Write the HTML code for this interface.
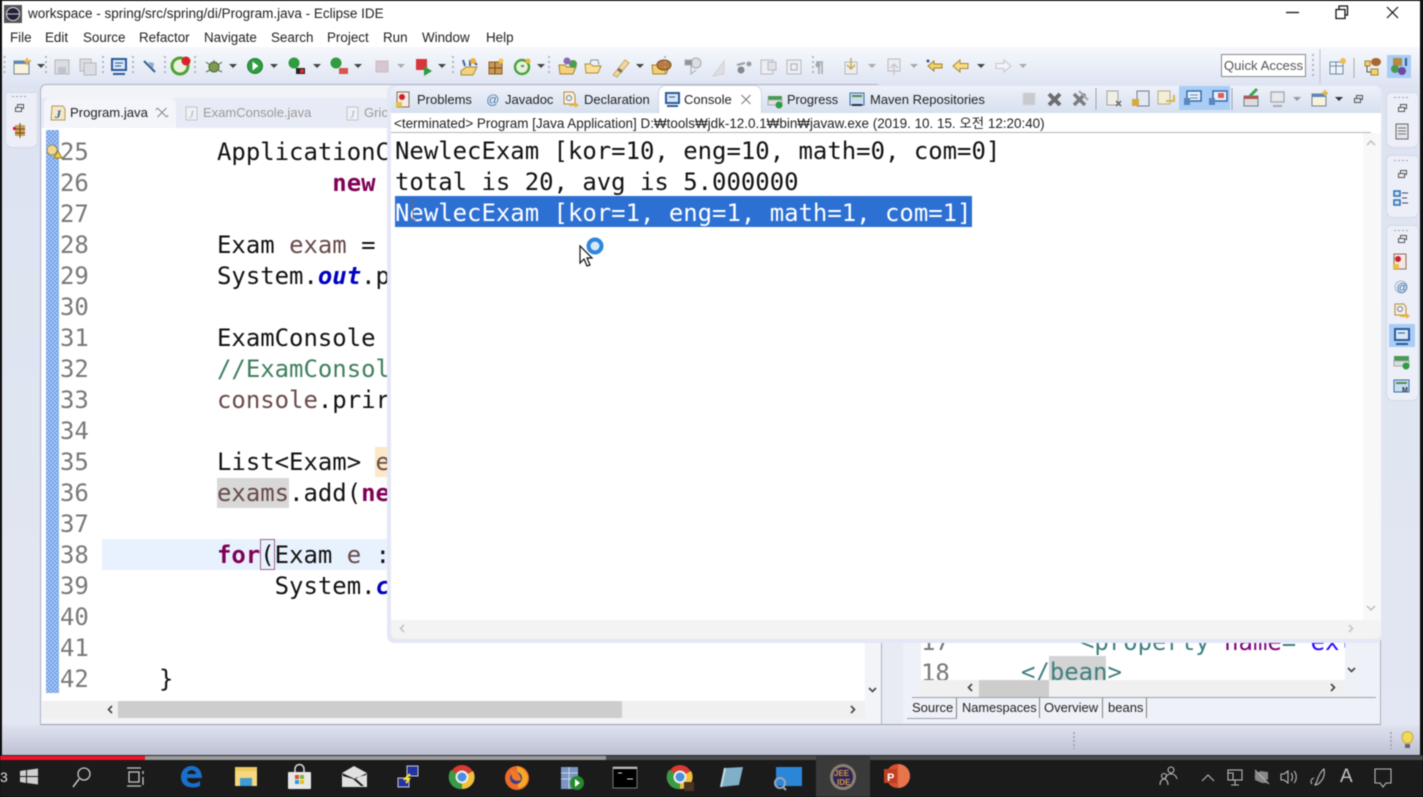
<!DOCTYPE html>
<html><head><meta charset="utf-8"><style>
html,body{margin:0;padding:0;background:#000}
#r{position:relative;width:1423px;height:797px;overflow:hidden;background:#d9dfee;font-family:"Liberation Sans","Noto Sans CJK KR",sans-serif;font-size:13px;color:#222;filter:blur(.4px)}
.a{position:absolute}
.t{position:absolute;white-space:pre;line-height:20px}
.m{position:absolute;white-space:pre;font-family:"DejaVu Sans Mono",monospace;font-size:23.95px;line-height:31px;color:#111}
.n{color:#787878}.k{color:#7f0055;font-weight:bold}.v{color:#6a4a4a}.f{color:#0000c0;font-weight:bold;font-style:italic}.c{color:#3f7f5f}
.tt{color:#3f7f7f}
svg{position:absolute;left:0;top:0}
</style></head><body><div id="r">
<!-- frame -->
<div class="a" style="left:0;top:0;width:1423px;height:1px;background:#222"></div>
<div class="a" style="left:2px;top:1px;width:1418px;height:46px;background:#fff"></div>
<div class="a" style="left:2px;top:47px;width:1418px;height:37px;background:linear-gradient(#f6f8fc,#dfe5f3)"></div>
<div class="a" style="left:2px;top:84px;width:1418px;height:641px;background:linear-gradient(#dde3f1,#e3e7f3)"></div>
<div class="a" style="left:2px;top:725px;width:1418px;height:30px;background:linear-gradient(#dfe3f0,#bcc0d3)"></div>
<div class="a" style="left:0;top:0;width:2px;height:755px;background:#111"></div>
<div class="a" style="left:1420px;top:0;width:3px;height:755px;background:#111"></div>
<!-- title / menu -->
<div class="t" style="left:28px;top:4px;font-size:13.5px">workspace - spring/src/spring/di/Program.java - Eclipse IDE</div>
<div class="t" style="left:10px;top:28px;font-size:13.4px">File</div>
<div class="t" style="left:45px;top:28px;font-size:13.4px">Edit</div>
<div class="t" style="left:83px;top:28px;font-size:13.4px">Source</div>
<div class="t" style="left:139px;top:28px;font-size:13.4px">Refactor</div>
<div class="t" style="left:204px;top:28px;font-size:13.4px">Navigate</div>
<div class="t" style="left:271px;top:28px;font-size:13.4px">Search</div>
<div class="t" style="left:327px;top:28px;font-size:13.4px">Project</div>
<div class="t" style="left:383px;top:28px;font-size:13.4px">Run</div>
<div class="t" style="left:422px;top:28px;font-size:13.4px">Window</div>
<div class="t" style="left:486px;top:28px;font-size:13.4px">Help</div>
<!-- quick access -->
<div class="t" style="left:1221px;top:54px;width:83px;height:21px;border:1px solid #8a8a8a;background:#fff;text-align:center;color:#555;font-size:13.2px;line-height:22px">Quick Access</div>
<!-- left trim -->
<div class="a" style="left:5px;top:92px;width:33px;height:56px;background:#eceff7;border:1px solid #d3d8e6;box-sizing:border-box;border-radius:0 0 7px 7px"></div>
<!-- right trim -->
<div class="a" style="left:1386px;top:92px;width:33px;height:56px;background:#eceff7;border:1px solid #d3d8e6;box-sizing:border-box;border-radius:5px 5px 7px 7px"></div>
<div class="a" style="left:1386px;top:155px;width:33px;height:63px;background:#eceff7;border:1px solid #d3d8e6;box-sizing:border-box;border-radius:5px 5px 7px 7px"></div>
<div class="a" style="left:1386px;top:225px;width:33px;height:176px;background:#eceff7;border:1px solid #d3d8e6;box-sizing:border-box;border-radius:5px 5px 7px 7px"></div>
<div class="a" style="left:1389px;top:324px;width:26px;height:23px;background:#a9cdf5"></div>

<!-- editor panel -->
<div class="a" style="left:40px;top:84px;width:842px;height:641px;background:#f1f3f9;border:1px solid #aeb3c0;border-bottom:1px solid #9a9fad;box-sizing:border-box;border-radius:6px 6px 0 0"></div>
<div class="a" style="left:41px;top:98px;width:840px;height:30px;background:#e7ebf5"></div>
<div class="a" style="left:44px;top:98px;width:132px;height:30px;background:#f3f5fa;border-radius:7px 7px 0 0"></div>
<div class="t" style="left:70px;top:103px;font-size:13.1px">Program.java</div>
<div class="t" style="left:203px;top:103px;font-size:13px;color:#9a9a9a">ExamConsole.java</div>
<div class="t" style="left:364px;top:103px;font-size:13.1px;color:#9a9a9a">Gric</div>
<div class="a" style="left:42px;top:128px;width:823px;height:573px;background:#fff"></div>
<div class="a" style="left:46px;top:130px;width:13px;height:563px;background-color:#8ab3ee;background-image:conic-gradient(#6f9fe6 25%,#a9c9f4 0 50%,#6f9fe6 0 75%,#a9c9f4 0);background-size:4px 4px"></div>
<div class="a" style="left:102px;top:539px;width:290px;height:31px;background:#e8f2fe"></div>
<div class="a" style="left:375px;top:447px;width:14px;height:30px;background:#fce8c6"></div>
<div class="a" style="left:217px;top:478px;width:72px;height:30px;background:#d8d8d8"></div>
<div class="a" style="left:260px;top:539px;width:13px;height:29px;border:1px solid #a0608a;box-sizing:content-box"></div>

<!-- line numbers -->
<div class="m n" style="left:60px;top:137px">25
26
27
28
29
30
31
32
33
34
35
36
37
38
39
40
41
42</div>
<div class="m" style="left:217px;top:137px;width:170px;overflow:hidden">ApplicationC
        <span class="k">new</span>

Exam <span class="v">exam</span> =
System.<span class="f">out</span>.p

ExamConsole
<span class="c">//ExamConsol</span>
<span class="v">console</span>.prir

List&lt;Exam&gt; <span class="v">e</span>
<span class="v">exams</span>.add(<span class="k">ne</span>

<span class="k">for</span>(Exam <span class="v">e</span> :
    System.<span class="f">c</span></div>
<div class="m" style="left:159px;top:664px">}</div>

<!-- editor scrollbars -->
<div class="a" style="left:42px;top:701px;width:823px;height:17px;background:#f0f0f0"></div>
<div class="a" style="left:118px;top:701px;width:504px;height:17px;background:#cdcdcd"></div>
<div class="a" style="left:865px;top:128px;width:15px;height:590px;background:#f3f4f8"></div>

<!-- sash + bottom right panel -->
<div class="a" style="left:882px;top:640px;width:21px;height:85px;background:#e9ebf4;border-bottom:1px solid #9a9fad;box-sizing:border-box"></div>
<div class="a" style="left:903px;top:640px;width:478px;height:85px;background:#eff1f8;border-right:1px solid #aeb3c0;border-bottom:1px solid #9a9fad;box-sizing:border-box"></div>
<div class="a" style="left:921px;top:640px;width:424px;height:40px;background:#fff;overflow:hidden">
  <div class="a" style="left:128px;top:16px;width:57px;height:24px;background:#d4d4d4"></div>
  <div class="m n" style="left:0;top:-13px">17
18</div>
  <div class="m tt" style="left:159px;top:-13px">&lt;property <span style="color:#7f007f">name</span>=<span style="color:#2a00ff">"ext</span></div>
  <div class="m tt" style="left:100px;top:17px">&lt;/bean&gt;</div>
</div>
<div class="a" style="left:921px;top:680px;width:424px;height:17px;background:#f0f0f0"></div>
<div class="a" style="left:979px;top:680px;width:70px;height:17px;background:#cdcdcd"></div>
<div class="a" style="left:912px;top:697px;width:464px;height:1px;background:#9a9fad"></div>
<div class="a" style="left:956px;top:698px;width:1px;height:20px;background:#808080"></div>
<div class="a" style="left:1039px;top:698px;width:1px;height:20px;background:#808080"></div>
<div class="a" style="left:1102px;top:698px;width:1px;height:20px;background:#808080"></div>
<div class="a" style="left:1146px;top:698px;width:1px;height:20px;background:#808080"></div>
<div class="a" style="left:907px;top:718px;width:50px;height:1px;background:#9a9fad"></div>
<div class="t" style="left:912px;top:698px;font-size:13px">Source</div>
<div class="t" style="left:962px;top:698px;font-size:12.8px">Namespaces</div>
<div class="t" style="left:1044px;top:698px;font-size:13px">Overview</div>
<div class="t" style="left:1108px;top:698px;font-size:13px">beans</div>

<!-- console panel -->
<div class="a" style="left:387px;top:85px;width:995px;height:558px;background:#e4e7f5;border-radius:7px"></div>
<div class="a" style="left:391px;top:86px;width:990px;height:27px;background:linear-gradient(#eef1f9,#d6e0f0);border-radius:7px 7px 0 0"></div>
<div class="a" style="left:659px;top:86px;width:102px;height:27px;background:#fff;border-radius:7px 7px 0 0;box-shadow:0 0 0 1px #d0d5e2"></div>
<div class="a" style="left:1179px;top:86px;width:51px;height:24px;background:#a9cdf5"></div>
<div class="a" style="left:391px;top:113px;width:990px;height:20px;background:#fff"></div>
<div class="a" style="left:391px;top:132px;width:980px;height:1px;background:#b5b5b5"></div>
<div class="a" style="left:391px;top:133px;width:990px;height:487px;background:#fff"></div>
<div class="a" style="left:1363px;top:133px;width:18px;height:487px;background:#f8f8f8"></div>
<div class="a" style="left:391px;top:620px;width:990px;height:19px;background:#f3f3f3;border-radius:0 0 6px 6px"></div>
<div class="a" style="left:395px;top:196px;width:577px;height:31px;background:#2d70d4"></div>
<div class="t" style="left:417px;top:90px">Problems</div>
<div class="t" style="left:505px;top:90px">Javadoc</div>
<div class="t" style="left:584px;top:90px">Declaration</div>
<div class="t" style="left:684px;top:90px">Console</div>
<div class="t" style="left:787px;top:90px;font-size:12.8px">Progress</div>
<div class="t" style="left:870px;top:90px">Maven Repositories</div>
<div class="t" style="left:394px;top:114px;font-size:13.45px">&lt;terminated&gt; Program [Java Application] D:₩tools₩jdk-12.0.1₩bin₩javaw.exe (2019. 10. 15. 오전 12:20:40)</div>
<div class="m" style="left:395px;top:136px">NewlecExam [kor=10, eng=10, math=0, com=0]
total is 20, avg is 5.000000
<span style="color:#fff">NewlecExam [kor=1, eng=1, math=1, com=1]</span></div>

<!-- progress + taskbar -->
<div class="a" style="left:0;top:755px;width:1423px;height:1px;background:#2a2a2a"></div>
<div class="a" style="left:0;top:756px;width:1423px;height:4px;background:#4b4b4b"></div>
<div class="a" style="left:0;top:756px;width:606px;height:4px;background:#9b9b9b"></div>
<div class="a" style="left:0;top:756px;width:145px;height:4px;background:#f2102a"></div>
<div class="a" style="left:0;top:760px;width:1423px;height:37px;background:#1b1b1b"></div>
<div class="a" style="left:816px;top:756px;width:54px;height:41px;background:#3a3a3a"></div>
<div class="t" style="left:0;top:767px;color:#ddd;font-size:14px">3</div>
<div class="t" style="left:1340px;top:764px;color:#c4c4c4;font-size:19px;line-height:26px">A</div>

<svg width="1423" height="797" viewBox="0 0 1423 797" fill="none">
<!-- title icon -->
<rect x="4" y="5" width="18" height="18" fill="#555"/><circle cx="13" cy="14" r="6.500" fill="#23203a" stroke="#ddd"/><path d="M7 14h12" stroke="#ccc"/>
<!-- window controls -->
<path d="M1286 12.500h13" stroke="#111" stroke-width="1.300"/>
<path d="M1336 9.500h9v9h-9zM1339 9v-3h8.500v9h-2.500" stroke="#111" stroke-width="1.300"/>
<path d="M1387 7l11 11M1398 7l-11 11" stroke="#111" stroke-width="1.200"/>
<!-- main toolbar -->
<g id="tb">
<rect x="14" y="61" width="15" height="13" fill="#f8f3dc" stroke="#6f8397"/><rect x="14" y="61" width="15" height="3" fill="#5c86b8"/><path d="M27 58v7M24 61h7" stroke="#e9b53f" stroke-width="2"/>
<rect x="55" y="60" width="14" height="14" fill="#dcdde2" stroke="#b4b7c0"/><rect x="58" y="67" width="8" height="7" fill="#c0c3cb"/>
<rect x="80" y="59" width="11" height="12" fill="#dcdde2" stroke="#b4b7c0"/><rect x="84" y="63" width="12" height="12" fill="#dcdde2" stroke="#b4b7c0"/>
<rect x="112" y="59" width="14" height="11" fill="#d9e6f6" stroke="#2b5c9a" stroke-width="2"/><path d="M115 63h8M115 66h6" stroke="#2b5c9a"/><path d="M113 74h12" stroke="#2b5c9a" stroke-width="2"/>
<path d="M144 61l11 11" stroke="#33618f" stroke-width="2"/><path d="M148 62l6 1-1 6z" fill="#8fa9c8"/>
<circle cx="180" cy="66" r="8" fill="#e9f2df" stroke="#52a332" stroke-width="3"/><circle cx="186" cy="61" r="4.500" fill="#d8232a"/>
<circle cx="214" cy="67" r="5" fill="#7f9b4e" stroke="#4c6a3c"/><path d="M206 62l4 3M206 72l4-2M222 62l-4 3M222 72l-4-2M214 60v3" stroke="#4c6a3c"/>
<circle cx="255" cy="66" r="7.500" fill="#2e9c3f" stroke="#1e7f30"/><path d="M252.500 61.500l6 4.500-6 4.500z" fill="#fff"/>
<circle cx="294" cy="63" r="5.500" fill="#2e9c3f"/><rect x="296" y="68" width="9" height="6" fill="#222"/><rect x="300" y="69" width="4" height="4" fill="#d82c2c"/>
<circle cx="336" cy="63" r="5.500" fill="#2e9c3f"/><rect x="339" y="68" width="9" height="6" fill="#d9534f"/>
<rect x="376" y="61" width="12" height="11" fill="#d6c7d0" stroke="#c9bcc8"/>
<rect x="416" y="59" width="11" height="11" fill="#d9353a"/><path d="M424 66l8 5-8 5z" fill="#2e9c3f"/>
<path d="M461 71l5-4h11l-4 8h-12z" fill="#f2d27a" stroke="#a88b3c"/><path d="M463 60l2 6M470 60v6M474 62l3 3" stroke="#3a63a8" stroke-width="2"/><circle cx="473" cy="61" r="3" fill="#e9b53f"/>
<rect x="489" y="62" width="13" height="12" fill="#c89a54" stroke="#8a5d22"/><path d="M495 62v12M489 68h13" stroke="#7a4b1c"/><circle cx="501" cy="61" r="2.500" fill="#f2c74c"/>
<circle cx="522" cy="67" r="7" fill="#e7f0da" stroke="#46a339" stroke-width="2.400"/><path d="M524 66h-3" stroke="#46a339" stroke-width="2"/><circle cx="528" cy="61" r="2.500" fill="#e9b53f"/>
<path d="M560 74l-1-9h6l2 2h9l-3 7z" fill="#f4d27c" stroke="#a4812e"/><circle cx="573" cy="64" r="4" fill="#4e9b52"/><circle cx="567" cy="61" r="3.500" fill="#8b68b8"/>
<path d="M586 73l-1-9h6l2 2h8l-3 7z" fill="#f8e09a" stroke="#b18d3a"/><path d="M590 64l1-4h7l1 5" stroke="#8a8f9a" fill="#eef1f8"/>
<path d="M613 75l12-15 4 3-12 14z" fill="#efd8a0" stroke="#c8a762"/><path d="M618 69l4 3" stroke="#7d7468" stroke-width="3"/>
<path d="M653 74l-1-9h7l2 2h8l-3 7z" fill="#f4cf70" stroke="#a4812e"/><ellipse cx="664" cy="65" rx="7" ry="5" fill="#bb7a3c" stroke="#7b4b1f"/>
<g stroke="#a8aab2"><circle cx="696" cy="63" r="5" fill="#dcdee4"/><path d="M691 61v13l5-4"/><rect x="685" y="60" width="7" height="5" fill="#8f939c"/></g>
<path d="M713 76l11-15v13z" fill="#dedee2" stroke="#d0d0d5"/>
<circle cx="741" cy="70" r="3.500" fill="#85878f"/><circle cx="749" cy="64" r="2.500" fill="#9a9ca5"/><path d="M737 65l8-2" stroke="#9a9ca5" stroke-width="2"/>
<rect x="761" y="60" width="12" height="14" fill="#eceef3" stroke="#b6b9c2"/><rect x="768" y="62" width="8" height="8" fill="#e0e2e8" stroke="#b6b9c2"/>
<rect x="787" y="60" width="14" height="14" fill="#eceef3" stroke="#b6b9c2"/><rect x="791" y="64" width="6" height="6" stroke="#a8abb4"/>
<path d="M816 62h7M819 62v12M822 62v12" stroke="#a4a6ae" stroke-width="1.500"/><circle cx="818" cy="65" r="2.500" fill="#a4a6ae"/>
<rect x="845" y="62" width="12" height="12" fill="#ecedf1" stroke="#b6b9c2"/><path d="M851 58v10M847 65l4 4 4-4" stroke="#c9aa52" stroke-width="1.500"/>
<rect x="888" y="59" width="12" height="12" fill="#ecedf1" stroke="#b6b9c2"/><path d="M894 75v-10M890 68l4-4 4 4" stroke="#c8c8cc" stroke-width="1.500"/>
<path d="M928 66l6-5v3h8v4h-8v3z" fill="#f2d36d" stroke="#a4812e"/><circle cx="928" cy="61" r="1.500" fill="#2b5c9a"/>
<path d="M953 66l7-6v3.500h8v5h-8v3.500z" fill="#f7dd85" stroke="#a88933"/>
<path d="M1011 66l-7-6v3.500h-8v5h8v3.500z" fill="#f4f5f8" stroke="#c4c6ce"/>
<g fill="#444"><path d="M37 64h8l-4 4z"/><path d="M229 64h8l-4 4z"/><path d="M270 64h8l-4 4z"/><path d="M313 64h8l-4 4z"/><path d="M354 64h8l-4 4z"/><path d="M438 64h8l-4 4z"/><path d="M537 64h8l-4 4z"/><path d="M636 64h8l-4 4z"/><path d="M977 64h8l-4 4z"/></g>
<g fill="#aaa"><path d="M397 64h8l-4 4z"/><path d="M868 64h8l-4 4z"/><path d="M910 64h8l-4 4z"/><path d="M1019 64h8l-4 4z"/></g>
<g stroke="#a0a4ae" stroke-dasharray="2 3" stroke-width="1.500"><path d="M4.500 56v20M46 56v20M103 56v20M133 56v20M165 56v20M195 56v20M453 56v20M549 56v20M665 56v20M813 56v20M1313 54v24"/></g>
<path d="M1320 49v34" stroke="#bcc2d0"/>
<rect x="1330" y="62" width="13" height="12" fill="#f1f3f8" stroke="#6a8aaa"/><path d="M1330 66h13M1336 62v12" stroke="#6a8aaa"/><circle cx="1343" cy="61" r="3" fill="#ecc04e"/>
<path d="M1354 58v20" stroke="#aaa"/>
<rect x="1387" y="55" width="24" height="23" fill="#a9cdf5"/>
<rect x="1365" y="61" width="5" height="5" fill="#f2d36d" stroke="#a4812e"/><rect x="1371" y="69" width="7" height="6" fill="#f2d36d" stroke="#a4812e"/><path d="M1367 66v6h4" stroke="#555"/><ellipse cx="1376" cy="62" rx="5" ry="4" fill="#a9662d"/>
<rect x="1393" y="58" width="9" height="8" fill="#b48a44"/><circle cx="1395" cy="69" r="4" fill="#4a9a55"/><circle cx="1402" cy="71" r="4" fill="#6b4aa0"/><path d="M1406 58v8" stroke="#2b5c9a" stroke-width="2"/>
</g>
<!-- left trim -->
<path d="M12 96.500h15" stroke="#9ca0ab" stroke-dasharray="2 2"/>
<g stroke="#555" fill="#eceff7"><rect x="17.500" y="104.500" width="6" height="4"/><rect x="15.500" y="107.500" width="6" height="4"/></g>
<rect x="15" y="125" width="10" height="11" fill="#caa05a"/><path d="M20 123v15M15 129h10M15 133h10" stroke="#7a4b1c"/><rect x="13" y="127" width="3" height="3" fill="#d14"/>
<!-- right trim -->
<g stroke="#a0a4ae" stroke-dasharray="2 2"><path d="M1394 97.500h15M1394 160.500h15M1394 230.500h15"/></g>
<g stroke="#555" fill="#eceff7"><rect x="1400.500" y="104.500" width="6" height="4"/><rect x="1398.500" y="107.500" width="6" height="4"/><rect x="1400.500" y="170.500" width="6" height="4"/><rect x="1398.500" y="173.500" width="6" height="4"/><rect x="1400.500" y="235.500" width="6" height="4"/><rect x="1398.500" y="238.500" width="6" height="4"/></g>
<rect x="1396" y="124" width="12" height="15" fill="#e3e5ea" stroke="#666"/><path d="M1398 128h8M1398 131h8M1398 134h8" stroke="#777"/>
<rect x="1394" y="191" width="6" height="5" fill="#cfe2f6" stroke="#2b6cb0" stroke-width="1.500"/><rect x="1394" y="200" width="6" height="5" fill="#cfe2f6" stroke="#2b6cb0" stroke-width="1.500"/><path d="M1402 193h6M1402 198h5M1402 203h6" stroke="#447"/>
<rect x="1394" y="254" width="12" height="15" fill="#f2e9e4" stroke="#8b6a5c"/><circle cx="1398" cy="259" r="3" fill="#d11f2a"/><rect x="1393" y="264" width="6" height="5" fill="#e8c043"/>
<circle cx="1401" cy="287" r="6" fill="#e2eaf5" stroke="#a8b6c8"/><text x="1396.500" y="291" font-size="11" font-style="italic" fill="#3a6aa0" font-family="Liberation Sans">@</text>
<path d="M1395 304h9l2 3v8h-11z" fill="#f9f1dd" stroke="#b08a3c"/><path d="M1400 315h6v-2l4 3-4 3v-2h-6z" fill="#e8b444"/><circle cx="1400" cy="309" r="2.500" stroke="#5a7db0"/>
<rect x="1395" y="329" width="14" height="11" fill="#d9e6f6" stroke="#2b5c9a" stroke-width="2"/><path d="M1398 333h7" stroke="#2b5c9a"/><path d="M1396 344h12" stroke="#2b5c9a" stroke-width="2"/>
<rect x="1394" y="356" width="15" height="5" fill="#4a9a55"/><rect x="1394" y="361" width="15" height="5" fill="#d8dde2" stroke="#aaa"/><circle cx="1406" cy="366" r="3.500" fill="#2e9c3f"/>
<rect x="1394" y="380" width="15" height="12" fill="#c7dcf2" stroke="#3b6ea5"/><path d="M1396 383h11" stroke="#5a8a4a" stroke-width="2"/><text x="1402" y="392" font-size="7" font-weight="bold" fill="#234" font-family="Liberation Sans">M</text>
<!-- editor tab icons -->
<path d="M52 106h11l2 3v11h-14z" fill="#f3e8c8" stroke="#b59a52"/><text x="55" y="118" font-size="12" font-style="italic" font-weight="bold" fill="#2b5c9a" font-family="Liberation Serif">J</text>
<path d="M157.500 108l9 9M166.500 108l-9 9M156 110l1-2M168 115l-1 2" stroke="#888"/>
<rect x="186" y="107" width="11" height="13" fill="#f1f1f4" stroke="#bfc3cd"/><text x="189" y="118" font-size="10" font-style="italic" fill="#99a8c0" font-family="Liberation Serif">J</text>
<rect x="347" y="107" width="11" height="13" fill="#f1f1f4" stroke="#bfc3cd"/><text x="350" y="118" font-size="10" font-style="italic" fill="#99a8c0" font-family="Liberation Serif">J</text>
<!-- markers -->
<circle cx="52" cy="150" r="5" fill="#f0d98f" stroke="#9c8f60"/><path d="M54 158l4-7 4 7z" fill="#f4d03f" stroke="#9a7d1c"/>
<!-- editor scroll arrows -->
<path d="M869 688l3.500 3.500 3.500-3.500M112 706l-3.500 3.500 3.500 3.500M851 706l3.500 3.500-3.500 3.500" stroke="#444" stroke-width="1.600"/>
<path d="M1348 668l3.500 3.500 3.500-3.500M972 684l-3.500 3.500 3.500 3.500M1331 684l3.500 3.500-3.500 3.500" stroke="#444" stroke-width="1.600"/>
<path d="M1367 145l4-4 4 4M1367 606l4 4 4-4M404 625l-3.500 3.500 3.500 3.500M1349 625l3.500 3.500-3.500 3.500" stroke="#c4c4c4" stroke-width="1.600"/>
<!-- console tab icons -->
<rect x="397" y="92" width="12" height="15" fill="#f3ede8" stroke="#8b6a5c"/><circle cx="402" cy="97" r="3" fill="#d11f2a"/><rect x="396" y="102" width="6" height="5" fill="#e8c043"/>
<text x="486" y="104" font-size="13" font-style="italic" fill="#4a7aa8" font-family="Liberation Sans">@</text>
<path d="M564 92h9l2 3v9h-11z" fill="#f9f1dd" stroke="#b08a3c"/><path d="M569 104h6v-2l4 3-4 3v-2h-6z" fill="#e8b444"/><circle cx="569" cy="98" r="2.500" stroke="#5a7db0"/>
<rect x="666" y="93" width="13" height="10" fill="#d9e6f6" stroke="#2b5c9a" stroke-width="2"/><path d="M669 97h6" stroke="#2b5c9a"/><path d="M667 106h11" stroke="#2b5c9a" stroke-width="2"/>
<path d="M741.500 95l9 9M750.500 95l-9 9" stroke="#777"/>
<rect x="768" y="96" width="14" height="4" fill="#4a9a55"/><rect x="768" y="100" width="14" height="5" fill="#dde0e4" stroke="#aaa"/><circle cx="779" cy="105" r="3.500" fill="#2e9c3f"/>
<rect x="850" y="93" width="14" height="12" fill="#c7dcf2" stroke="#3b6ea5"/><path d="M852 96h10" stroke="#5a8a4a" stroke-width="2"/><path d="M852 105h10" stroke="#234" stroke-width="2"/>
<!-- console toolbar -->
<rect x="1023" y="93" width="12" height="12" fill="#c8cad0" stroke="#d5d7dc"/>
<path d="M1049 94l11 11M1060 94l-11 11" stroke="#6d6d70" stroke-width="4"/>
<path d="M1074 94l11 11M1085 94l-11 11" stroke="#7c7c80" stroke-width="3.500"/><path d="M1079 91l9 9" stroke="#a4a6ae" stroke-width="2"/>
<path d="M1096 88v22M1232 88v22" stroke="#9ea2ac"/>
<rect x="1107" y="91" width="11" height="14" fill="#f0efe5" stroke="#a3a59b"/><path d="M1116 101l5 5M1121 101l-5 5" stroke="#666" stroke-width="1.500"/>
<rect x="1137" y="91" width="12" height="15" fill="#e3e9f1" stroke="#6e7c90"/><rect x="1132" y="99" width="7" height="7" fill="#d8a93c"/>
<rect x="1158" y="91" width="12" height="13" fill="#f4eed2" stroke="#b3ab8f"/><path d="M1174 95v6h-8" stroke="#d9b548" stroke-width="2"/>
<rect x="1187" y="91" width="14" height="10" fill="#e8f1fb" stroke="#2d65a8" stroke-width="1.400"/><rect x="1184" y="98" width="6" height="7" fill="#5a88bc"/><path d="M1190 95h8M1190 98h8" stroke="#5a88bc"/>
<rect x="1213" y="91" width="14" height="10" fill="#e8f1fb" stroke="#2d65a8" stroke-width="1.400"/><rect x="1209" y="98" width="6" height="7" fill="#5a88bc"/><rect x="1218" y="93" width="6" height="5" fill="#e25c5c"/>
<rect x="1244" y="96" width="14" height="10" fill="#ddd" stroke="#6e7c90"/><rect x="1244" y="96" width="14" height="3" fill="#b85252"/><path d="M1250 96l7-7" stroke="#3ea24c" stroke-width="3"/>
<rect x="1271" y="92" width="13" height="10" fill="#e8e9ed" stroke="#a8abb3" stroke-width="1.400"/><path d="M1273 106h9" stroke="#a8abb3" stroke-width="2"/>
<path d="M1293 97h8l-4 4z" fill="#999"/>
<rect x="1312" y="94" width="14" height="12" fill="#f8f3dc" stroke="#6f8397"/><rect x="1312" y="94" width="14" height="3" fill="#5c86b8"/><path d="M1325 90v6M1322 93h6" stroke="#e9b53f" stroke-width="2"/>
<path d="M1335 97h8l-4 4z" fill="#333"/>
<g stroke="#555" fill="#dde4f1"><rect x="1356.500" y="95.500" width="6" height="4"/><rect x="1354.500" y="98.500" width="6" height="4"/></g>
<!-- cursors -->
<path d="M413 201v19M410 201h6M410 220h6" stroke="#667" stroke-width="1"/>
<circle cx="595" cy="246" r="6.500" fill="#d6e7f7" stroke="#2e86dd" stroke-width="4"/>
<path d="M580 246v17l4-4 3 7 3-1-3-7h5z" fill="#fff" stroke="#111" stroke-width="1.200"/>
<!-- status bar -->
<path d="M1074 732v17M1391 732v17" stroke="#8f93a3" stroke-dasharray="2 2" stroke-width="1.300"/>
<path d="M1403 745c-3-3-3-5-3-6a5 5 0 0 1 11 0c0 1 0 3-3 6z" transform="translate(2 -2)" fill="#f2d95c" stroke="#c8a834"/><rect x="1405" y="744" width="5" height="4" fill="#666"/>
<!-- taskbar icons -->
<g fill="#cfcfcf"><path d="M20 771l6-1v6h-6zM27 770l11-1.500V776h-11zM20 777h6v6l-6-1zM27 777h11v7.500l-11-1.500z"/></g>
<circle cx="84" cy="774" r="6" stroke="#c8c8c8" stroke-width="1.300"/><path d="M79 779l-6 8" stroke="#c8c8c8" stroke-width="1.500"/>
<path d="M127 768h14M127 786h14M129 772h10v10h-10zM143 771v3M143 777v8" stroke="#c8c8c8" stroke-width="1.300"/>
<path d="M181 777c0-7 5-11 11-11 6 0 10 5 10 12h-15c0 6 8 7 13 3v5c-7 3-19 2-19-9zM187 774h9c0-5-8-5-9 0z" fill="#1a6fc9" fill-rule="evenodd"/>
<rect x="235" y="767" width="22" height="19" fill="#efc95d"/><rect x="235" y="771" width="22" height="15" fill="#f4d77e"/><rect x="240" y="778" width="12" height="8" fill="#3f9bd4"/>
<rect x="288" y="772" width="23" height="17" rx="1" fill="#e8e8e8"/><path d="M295 772v-3a4 4 0 0 1 9 0v3" stroke="#ddd" stroke-width="1.500"/><rect x="295" y="775" width="4" height="4" fill="#e74a2c"/><rect x="300" y="775" width="4" height="4" fill="#7cb82f"/><rect x="295" y="780" width="4" height="4" fill="#1fa0e0"/><rect x="300" y="780" width="4" height="4" fill="#f5b91a"/>
<path d="M342 773l12-7 13 7v14h-25z" fill="#e0e0e0"/><path d="M342 773l13 6 12-6-1 2-11 3 9 8h-3l-8-7-10-3z" fill="#1b1b1b"/>
<rect x="407" y="766" width="11" height="10" fill="#2231a5" stroke="#ccc"/><rect x="398" y="778" width="11" height="9" fill="#2231a5" stroke="#ccc"/><path d="M410 774l-5 5 4 0-3 4" stroke="#f2e53a" stroke-width="2"/>
<circle cx="462" cy="777" r="12" fill="#d63c30"/><path d="M462 777L451 770A12 12 0 0 0 462 789z" fill="#3a9b44"/><path d="M462 777V789A12 12 0 0 0 473 771z" fill="#f0c038"/><circle cx="462" cy="777" r="5.500" fill="#4a8fe0" stroke="#eee" stroke-width="2"/>
<circle cx="517" cy="778" r="12" fill="#ea6b2a"/><path d="M517 766c6 2 10 6 11 11 0 6-4 11-10 11" fill="#f4a826"/><circle cx="516" cy="778" r="6" fill="#3f3d8f"/><path d="M510 770c6 0 11 4 11 10-3 2-9 0-9-3" fill="#f07a2a"/>
<rect x="561" y="767" width="17" height="22" fill="#7b96c2"/><path d="M561 773h17M561 779h17M569 767v22" stroke="#c7d4e8"/><circle cx="577" cy="783" r="7" fill="#248a2d"/><path d="M575 779l5 4-5 4z" fill="#fff"/>
<rect x="613" y="767" width="24" height="21" fill="#000" stroke="#777"/><rect x="613" y="767" width="24" height="2" fill="#bbb"/><path d="M618 773h4M627 779h6" stroke="#ddd"/>
<circle cx="680" cy="777" r="12" fill="#d63c30"/><path d="M680 777L669 770A12 12 0 0 0 680 789z" fill="#3a9b44"/><path d="M680 777V789A12 12 0 0 0 691 771z" fill="#f0c038"/><circle cx="680" cy="777" r="5.500" fill="#4a8fe0" stroke="#eee" stroke-width="2"/><rect x="684" y="782" width="10" height="9" fill="#4a3422"/>
<path d="M725 768l18-1-4 18-18 2z" fill="#7fb0c8"/><path d="M721 787l4-19" stroke="#c9dbe4" stroke-width="2"/>
<rect x="776" y="767" width="26" height="19" fill="#2c86d8"/><circle cx="780" cy="783" r="5" stroke="#97a8b8" stroke-width="2"/><path d="M783 787l3 3" stroke="#97a8b8" stroke-width="2"/>
<circle cx="843" cy="777" r="13" fill="#8a8072"/><circle cx="843" cy="777" r="10" fill="#2c2555"/><rect x="835" y="770" width="16" height="14" fill="#2c2555"/><text x="834" y="776" font-size="8" fill="#d59a3c" font-weight="bold" font-family="Liberation Sans">JEE</text><text x="837" y="785" font-size="8" fill="#d59a3c" font-weight="bold" font-family="Liberation Sans">IDE</text>
<circle cx="898" cy="776" r="12" fill="#d8502c"/><path d="M898 764a12 12 0 0 1 0 24z" fill="#e8744c"/><rect x="884" y="769" width="13" height="14" fill="#c03f22"/><text x="887" y="781" font-size="11" fill="#fff" font-weight="bold" font-family="Liberation Sans">P</text>
<g stroke="#b8b8b8" stroke-width="1.100"><circle cx="1171" cy="770" r="3"/><path d="M1165 779c1-4 3-5 6-5s5 1 6 5"/><circle cx="1164" cy="776" r="2.500"/><path d="M1160 785c0-4 2-6 4-6s4 2 4 6"/>
<path d="M1202 781l6-6 6 6" /><rect x="1228" y="770" width="14" height="10"/><path d="M1235 780v5M1231 785h8M1228 773h5v7"/>
<path d="M1288 771v12l-4-3h-3v-6h3zM1291 773c2 2 2 6 0 8M1294 771c3 3 3 9 0 12"/><path d="M1324 769c-3 2-6 8-7 12l-2 4c2 0 5-2 6-4 3-3 4-8 3-12zM1314 778c-3 1-4 4-2 6"/>
<path d="M1375 769h16v14h-5l-3 4-3-4h-5z"/></g>
<path d="M1255 771l13 12-6 0-7-3zM1254 777l6-6 8 1v8" fill="#888"/><path d="M1255 770l14 14" stroke="#bbb" stroke-width="1"/>
</svg>
</div></body></html>
